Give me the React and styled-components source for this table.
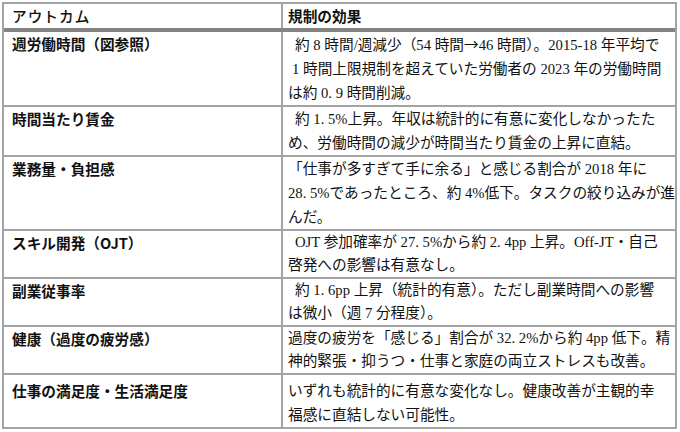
import React from "react";
import styled, { createGlobalStyle } from "styled-components";

const Global = createGlobalStyle`
  html, body { margin: 0; padding: 0; background: #ffffff; }
  body { font-family: "Liberation Serif", "Noto Sans CJK JP", serif; color: #111; }
`;

const Table = styled.div`
  box-sizing: border-box;
  width: 675px;
  margin: 2px 0 0 2px;
  border: 2px solid #a3a3a3;
  display: flex;
  flex-direction: column;
`;

const Row = styled.div`
  display: grid;
  grid-template-columns: 279px 1fr;
  line-height: ${(p) => p.$lh || 24}px;
  border-top: ${(p) => (p.$first ? "none" : p.$afterHead ? "4px solid #848484" : "2px solid #a3a3a3")};
`;

const KeyCell = styled.div`
  border-right: 2px solid #a3a3a3;
  padding: ${(p) => p.$padTop || 0}px 8px 0 8px;
  font-family: "Noto Sans CJK JP", sans-serif;
  font-weight: ${(p) => (p.$head ? 500 : 700)};
  font-size: 14.67px;
  letter-spacing: ${(p) => (p.$head ? "1px" : "0")};
`;

const ValueCell = styled.div`
  padding: ${(p) => p.$padTop || 0}px 4px 0 5px;
  font-size: 14.67px;
  font-weight: ${(p) => (p.$head ? 700 : 400)};
  font-family: ${(p) =>
    p.$head
      ? `"Noto Sans CJK JP", sans-serif`
      : `"Liberation Serif", "Noto Sans CJK JP", serif`};
`;

const Line = styled.span`
  display: block;
  white-space: nowrap;
  padding-left: ${(p) => p.$indent || 0}px;
`;

const Arrow = styled.span`
  display: inline-block;
  width: 14.67px;
  text-align: center;
  font-family: "Noto Sans CJK JP", sans-serif;
`;

const rows = [
  {
    key: "週労働時間（図参照）",
    lines: [
      [<>約 8 時間/週減少（54 時間<Arrow>→</Arrow>46 時間）。2015-18 年平均で</>, 7],
      ["1 時間上限規制を超えていた労働者の 2023 年の労働時間", 4],
      ["は約 0. 9 時間削減。", 0],
    ],
  },
  {
    key: "時間当たり賃金",
    lines: [
      ["約 1. 5%上昇。年収は統計的に有意に変化しなかったた", 7],
      ["め、労働時間の減少が時間当たり賃金の上昇に直結。", 0],
    ],
  },
  {
    key: "業務量・負担感",
    lines: [
      ["「仕事が多すぎて手に余る」と感じる割合が 2018 年に", 0],
      ["28. 5%であったところ、約 4%低下。タスクの絞り込みが進", 0],
      ["んだ。", 0],
    ],
  },
  {
    key: "スキル開発（OJT）",
    lh: 23,
    lines: [
      ["OJT 参加確率が 27. 5%から約 2. 4pp 上昇。Off-JT・自己", 7],
      ["啓発への影響は有意なし。", 0],
    ],
  },
  {
    key: "副業従事率",
    lh: 23,
    lines: [
      ["約 1. 6pp 上昇（統計的有意）。ただし副業時間への影響", 7],
      ["は微小（週 7 分程度）。", 0],
    ],
  },
  {
    key: "健康（過度の疲労感）",
    lh: 23,
    lines: [
      ["過度の疲労を「感じる」割合が 32. 2%から約 4pp 低下。精", 0],
      ["神的緊張・抑うつ・仕事と家庭の両立ストレスも改善。", 0],
    ],
  },
  {
    key: "仕事の満足度・生活満足度",
    padTop: 4,
    lines: [
      ["いずれも統計的に有意な変化なし。健康改善が主観的幸", 0],
      ["福感に直結しない可能性。", 0],
    ],
  },
];

export default function App() {
  return (
    <>
      <Global />
      <Table>
        <Row $first>
          <KeyCell $head>アウトカム</KeyCell>
          <ValueCell $head>規制の効果</ValueCell>
        </Row>
        {rows.map((r, i) => (
          <Row key={r.key} $afterHead={i === 0} $lh={r.lh}>
            <KeyCell $padTop={r.padTop}>{r.key}</KeyCell>
            <ValueCell $padTop={r.padTop}>
              {r.lines.map(([t, ind], j) => (
                <Line key={j} $indent={ind}>
                  {t}
                </Line>
              ))}
            </ValueCell>
          </Row>
        ))}
      </Table>
    </>
  );
}
